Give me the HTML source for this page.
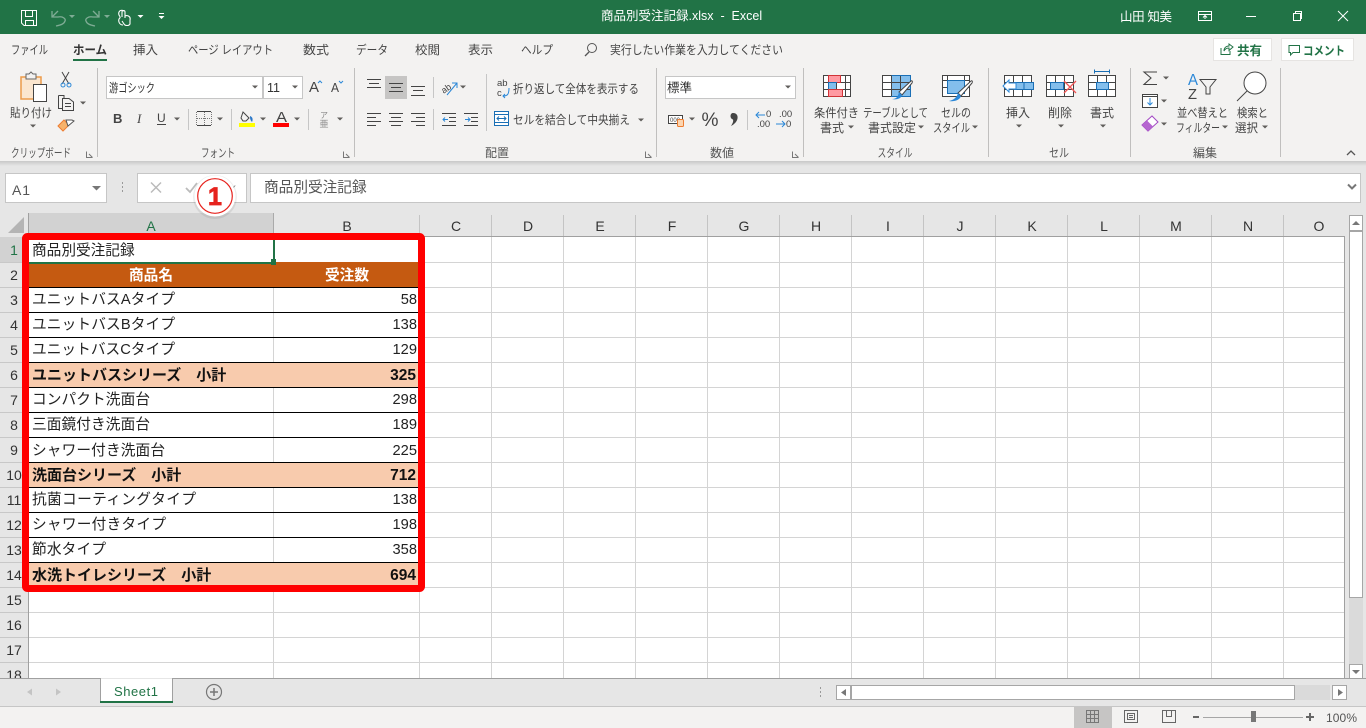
<!DOCTYPE html>
<html lang="ja"><head><meta charset="utf-8"><title>商品別受注記録.xlsx - Excel</title>
<style>
html,body{margin:0;padding:0;width:1366px;height:728px;overflow:hidden;background:#fff}
svg{display:block;font-family:"Liberation Sans","Noto Sans CJK JP",sans-serif}
svg text{white-space:pre}
.r{shape-rendering:crispEdges}
.rb{font-size:12px;fill:#444}
.m{text-anchor:middle}
.e{text-anchor:end}
.ch{font-size:14px;fill:#333;text-anchor:middle}
.rh{font-size:14px;fill:#333;text-anchor:middle}
.c{font-size:14.67px;fill:#222}
.n{font-size:14.67px;fill:#222;text-anchor:end}
.b{font-size:15px;font-weight:bold;fill:#111}
.bn{font-size:15.5px;font-weight:bold;fill:#111;text-anchor:end}
.ln{stroke:#444;stroke-width:1;shape-rendering:crispEdges;fill:none}
</style></head><body>
<svg width="1366" height="728" viewBox="0 0 1366 728" xmlns="http://www.w3.org/2000/svg">
<defs>
<path id="dd" d="M-3 -1.500H3L0 1.500Z" fill="#605e5c"/>
<linearGradient id="sh" x1="0" y1="0" x2="0" y2="1"><stop offset="0" stop-color="#c8c8c8"/><stop offset="1" stop-color="#e6e6e6"/></linearGradient>
</defs>
<rect class="r" width="1366" height="728" fill="#e6e6e6"/>
<!-- title bar -->
<rect class="r" width="1366" height="34" fill="#217346"/>
<g fill="none" stroke="#fff" stroke-width="1">
<path d="M21.500 10.500H36.500V25.500H24L21.500 23Z"/><path d="M25.500 10.500V16.500H32.500V10.500M25.500 25.500V20.500H33.500V25.500"/>
</g>
<g fill="none" stroke="#7fac95" stroke-width="1.300">
<path d="M52 11V17H58C63 16 66 19 65 21C64 24 61 25 56 26"/><path d="M52 17L58 11"/>
<path d="M99 11V17H93C88 16 85 19 86 21C87 24 90 25 95 26"/><path d="M99 17L93 11"/>
</g>
<path d="M69 15H75L72 18Z M104 15H110L107 18Z" fill="#7fac95"/>
<path d="M124 11C120 9 118 12 119 15C120 17 121 17 119 19C118 22 120 25 123 25M122 17V12C122 10 125 10 125 12V18M125 16C127 15 131 16 130 20V24C129 26 125 26 124 24L122 21" fill="none" stroke="#fff" stroke-width="1.100"/>
<path d="M137.500 15H143.500L140.500 18Z" fill="#fff"/>
<path d="M159 13H164V14H159Z M158.500 16H164.500L161.500 19Z" fill="#fff"/>
<text x="601" y="20" font-size="12.500" fill="#fff">商品別受注記録.xlsx  -  Excel</text>
<text x="1120" y="21" font-size="12.500" fill="#fff" textLength="52">山田 知美</text>
<g fill="none" stroke="#fff" stroke-width="1">
<path class="r" d="M1198.500 11.500H1211.500V20.500H1198.500ZM1198.500 14.500H1211.500"/><path d="M1205 19V15.500M1203 17.500L1205 15.500L1207 17.500"/>
<path class="r" d="M1246 16.500H1256"/>
<path class="r" d="M1293.500 13.500H1300.500V20.500H1293.500ZM1295.500 13.500V11.500H1301.500V18.500H1300.500"/>
<path d="M1338 11L1348 21M1348 11L1338 21"/>
</g>
<!-- ribbon -->
<rect class="r" y="34" width="1366" height="127" fill="#f3f2f1"/>
<rect class="r" y="161" width="1366" height="5" fill="url(#sh)"/>
<g class="rb">
<text x="11" y="54" textLength="37" lengthAdjust="spacingAndGlyphs">ファイル</text>
<text x="73" y="54" font-weight="bold" fill="#333" textLength="34" lengthAdjust="spacingAndGlyphs">ホーム</text>
<text x="133" y="54" textLength="25" lengthAdjust="spacingAndGlyphs">挿入</text>
<text x="188" y="54" textLength="85" lengthAdjust="spacingAndGlyphs">ページ レイアウト</text>
<text x="303" y="54" textLength="26" lengthAdjust="spacingAndGlyphs">数式</text>
<text x="356" y="54" textLength="32" lengthAdjust="spacingAndGlyphs">データ</text>
<text x="415" y="54" textLength="25" lengthAdjust="spacingAndGlyphs">校閲</text>
<text x="468" y="54" textLength="25" lengthAdjust="spacingAndGlyphs">表示</text>
<text x="521" y="54" textLength="32" lengthAdjust="spacingAndGlyphs">ヘルプ</text>
<text x="610" y="54" textLength="173" lengthAdjust="spacingAndGlyphs">実行したい作業を入力してください</text>
</g>
<rect class="r" x="73" y="59" width="34" height="2" fill="#217346"/>
<circle cx="592" cy="48" r="4.500" fill="none" stroke="#555"/><path d="M589 52L585 56" stroke="#555" stroke-width="1.300"/>
<rect class="r" x="1213.500" y="38.500" width="58" height="22" fill="#fff" stroke="#e6e4e2"/>
<rect class="r" x="1281.500" y="38.500" width="72" height="22" fill="#fff" stroke="#e6e4e2"/>
<path d="M1221 48V54.500H1230V51M1224 51C1224 47 1227 46 1229 46V44L1233 47L1229 50.500V48C1227 48 1225 49 1224 51Z" fill="none" stroke="#217346"/>
<text x="1237" y="55" font-size="12.500" font-weight="bold" fill="#217346">共有</text>
<path d="M1289 45.500H1299.500V52.500H1293L1290.500 55V52.500H1289Z" fill="none" stroke="#217346"/>
<text x="1303" y="55" font-size="12" font-weight="bold" fill="#217346" textLength="42" lengthAdjust="spacingAndGlyphs">コメント</text>
<!-- group separators -->
<g class="r" fill="#c0bfbe">
<rect x="97" y="68" width="1" height="89"/><rect x="354" y="68" width="1" height="89"/><rect x="656" y="68" width="1" height="89"/><rect x="803" y="68" width="1" height="89"/><rect x="988" y="68" width="1" height="89"/><rect x="1130" y="68" width="1" height="89"/><rect x="1280" y="68" width="1" height="89"/>
</g>
<g font-size="12" fill="#555" text-anchor="middle">
<text x="41" y="157" textLength="60" lengthAdjust="spacingAndGlyphs">クリップボード</text><text x="218" y="157" textLength="34" lengthAdjust="spacingAndGlyphs">フォント</text><text x="497" y="157">配置</text><text x="722" y="157">数値</text><text x="895" y="157" textLength="35" lengthAdjust="spacingAndGlyphs">スタイル</text><text x="1059" y="157" textLength="20" lengthAdjust="spacingAndGlyphs">セル</text><text x="1205" y="157">編集</text>
</g>
<g fill="none" stroke="#777" stroke-width="1">
<path d="M86.500 151.500V157.500H92.500M89 154L92.500 157.500"/><path d="M343.500 151.500V157.500H349.500M346 154L349.500 157.500"/><path d="M645.500 151.500V157.500H651.500M648 154L651.500 157.500"/><path d="M792.500 151.500V157.500H798.500M795 154L798.500 157.500"/>
</g>
<!-- clipboard -->
<rect x="21" y="77" width="20" height="22" fill="#fbe6cf" stroke="#ed9b4a" stroke-width="1.500"/>
<path d="M26 77V74H29L31 72L33 74H36V79H26Z" fill="#f3f2f1" stroke="#666"/>
<rect class="r" x="33.500" y="84.500" width="13" height="17" fill="#fff" stroke="#444"/>
<text x="31" y="117" class="rb m" textLength="42" lengthAdjust="spacingAndGlyphs">貼り付け</text>
<use href="#dd" x="33" y="126"/>
<path d="M62 72L69 84M69 72L62 84" stroke="#444" fill="none"/><circle cx="63" cy="85" r="2" fill="none" stroke="#2b88d8"/><circle cx="69" cy="85" r="2" fill="none" stroke="#2b88d8"/>
<path d="M58.500 95.500H64V98M58.500 95.500V108.500H62.500M62.500 98.500H69L73.500 102V110.500H62.500Z" fill="none" stroke="#444"/><path class="r" d="M65 103.500H71M65 106.500H71" stroke="#444"/>
<use href="#dd" x="83" y="103"/>
<path d="M58 126L64 120L69 125L63 131Z" fill="#f6b26b" stroke="#ed7d31"/><path d="M66 120L72 120L74 121L68 126Z" fill="#fff" stroke="#555"/>
<!-- font -->
<rect class="r" x="106.500" y="76.500" width="156" height="22" fill="#fff" stroke="#c6c6c6"/>
<rect class="r" x="263.500" y="76.500" width="39" height="22" fill="#fff" stroke="#c6c6c6"/>
<text x="109" y="92" font-size="12" fill="#333" textLength="46" lengthAdjust="spacingAndGlyphs">游ゴシック</text>
<text x="267" y="92" font-size="12.500" fill="#333">11</text>
<use href="#dd" x="255" y="87"/><use href="#dd" x="295" y="87"/>
<text x="309" y="92" font-size="15" fill="#444" textLength="10" lengthAdjust="spacingAndGlyphs">A</text><path d="M318 83L320 81L322 83" fill="none" stroke="#2b88d8"/>
<text x="331" y="92" font-size="13" fill="#444" textLength="8" lengthAdjust="spacingAndGlyphs">A</text><path d="M339 81L341 83L343 81" fill="none" stroke="#2b88d8"/>
<text x="113" y="123" font-size="13" font-weight="bold" fill="#444">B</text>
<text x="137" y="123" font-size="13" font-style="italic" font-family="Liberation Serif" fill="#444">I</text>
<text x="157" y="122" font-size="12" fill="#444">U</text><rect class="r" x="157" y="124" width="9" height="1" fill="#444"/>
<use href="#dd" x="177" y="119"/>
<rect class="r" x="188" y="109" width="1" height="21" fill="#c6c6c6"/>
<path class="r" d="M197 111.500H211M197 125.500H211" stroke="#444"/><path class="r" d="M196.500 112V125M211.500 112V125M204.500 112V125M197 118.500H211" stroke="#777" stroke-dasharray="1 1"/>
<use href="#dd" x="220" y="119"/>
<rect class="r" x="231" y="109" width="1" height="21" fill="#c6c6c6"/>
<path d="M243 112L249 118L246 121H243L241 118Z" fill="none" stroke="#444"/><path d="M250 116C253 117 253 120 252 122C250 120 250 118 250 116Z" fill="#2b78c8"/>
<rect class="r" x="239" y="123" width="16" height="4" fill="#ff0"/>
<use href="#dd" x="263" y="119"/>
<text x="276" y="122" font-size="15" fill="#444" textLength="11" lengthAdjust="spacingAndGlyphs">A</text>
<rect class="r" x="273" y="123" width="16" height="4" fill="#f00"/>
<use href="#dd" x="297" y="119"/>
<rect class="r" x="308" y="109" width="1" height="21" fill="#c6c6c6"/>
<text x="324" y="118" font-size="8" fill="#888" text-anchor="middle">ア</text><text x="324" y="127" font-size="9" fill="#888" text-anchor="middle">亜</text>
<use href="#dd" x="340" y="119"/>
<!-- alignment -->
<rect class="r" x="385" y="76" width="22" height="23" fill="#c6c5c4"/>
<g class="ln">
<path d="M367 79.500H381M369 83.500H379M367 87.500H381"/>
<path d="M389 83.500H403M391 87.500H401M389 91.500H403"/>
<path d="M411 86.500H425M413 90.500H423M411 95.500H425"/>
<path d="M367 113.500H381M367 117.500H376M367 121.500H381M367 125.500H376"/>
<path d="M389 113.500H403M391 117.500H401M389 121.500H403M391 125.500H401"/>
<path d="M411 113.500H425M416 117.500H425M411 121.500H425M416 125.500H425"/>
<path d="M442 113.500H456M449 117.500H456M449 121.500H456M442 125.500H456"/>
<path d="M464 113.500H478M471 117.500H478M471 121.500H478M464 125.500H478"/>
</g>
<path d="M448 119.500H443M445 117.500L443 119.500L445 121.500" fill="none" stroke="#2b88d8"/>
<path d="M465 119.500H470M468 117.500L470 119.500L468 121.500" fill="none" stroke="#2b88d8"/>
<rect class="r" x="433" y="77" width="1" height="21" fill="#c6c6c6"/><rect class="r" x="433" y="109" width="1" height="21" fill="#c6c6c6"/>
<text x="441" y="91" font-size="9" fill="#444" transform="rotate(-35 447 88)">ab</text>
<path d="M447 95L457 83M452 83H457V88" fill="none" stroke="#2b88d8"/>
<use href="#dd" x="463" y="87"/>
<rect class="r" x="486" y="74" width="1" height="57" fill="#c6c6c6"/>
<text x="497" y="86" font-size="9.500" fill="#444">ab</text><text x="497" y="96" font-size="9.500" fill="#444">c</text>
<path d="M509 88C509 95 507 96 503 96M505 94L503 96L505 98" fill="none" stroke="#2b88d8"/>
<text x="513" y="93" class="rb" textLength="126" lengthAdjust="spacingAndGlyphs">折り返して全体を表示する</text>
<rect class="r" x="494.500" y="111.500" width="14" height="14" fill="#fff" stroke="#1a6fb5"/><path class="r" d="M495 114.500H508M495 122.500H508" stroke="#1a6fb5"/>
<path d="M497 118.500H506M499 116.500L497 118.500L499 120.500M504 116.500L506 118.500L504 120.500" fill="none" stroke="#1a6fb5"/>
<text x="513" y="124" class="rb" textLength="117" lengthAdjust="spacingAndGlyphs">セルを結合して中央揃え</text>
<use href="#dd" x="641" y="120"/>
<!-- number -->
<rect class="r" x="665.500" y="76.500" width="130" height="22" fill="#fff" stroke="#c6c6c6"/>
<text x="667" y="92" font-size="12.500" fill="#333">標準</text><use href="#dd" x="788" y="87"/>
<rect class="r" x="668.500" y="115.500" width="14" height="8" fill="#fff" stroke="#444"/><text x="670" y="122" font-size="6" fill="#444">000</text>
<rect x="677.500" y="119.500" width="6" height="7" rx="1" fill="#fcd5b0" stroke="#ed7d31"/>
<use href="#dd" x="692" y="119"/>
<text x="710" y="126" font-size="19" fill="#444" text-anchor="middle" textLength="17" lengthAdjust="spacingAndGlyphs">%</text>
<path d="M733 113C737 113 738 116 737.500 118.500C737 121 735 124 731 126C733 123 733.500 121 733 119.500C729.500 118.500 730 113 733 113Z" fill="#444"/>
<rect class="r" x="747" y="110" width="1" height="20" fill="#c6c6c6"/>
<g font-size="9.500" fill="#444"><text x="766" y="117">0</text><text x="757" y="127">.00</text><text x="779" y="117">.00</text><text x="786" y="127">0</text></g>
<path d="M765 115H756M759 112L756 115L759 118M776 124H785M782 121L785 124L782 127" fill="none" stroke="#2b88d8"/>
<!-- styles -->
<g class="r">
<rect x="823.500" y="75.500" width="27" height="21" fill="#fff" stroke="#444"/>
<rect x="828.500" y="75.500" width="12" height="7" fill="#ff9aa2" stroke="#d13438"/>
<rect x="828.500" y="82.500" width="8" height="7" fill="#83beec" stroke="#1a6fb5"/>
<rect x="828.500" y="89.500" width="14" height="7" fill="#ff9aa2" stroke="#d13438"/>
<path d="M845.500 76V96M823.500 82.500H828M823.500 89.500H828M841 82.500H850M843 89.500H850M836.500 83V89" stroke="#444" fill="none"/>
<rect x="882.500" y="75.500" width="28" height="21" fill="#fff" stroke="#444"/>
<rect x="891.500" y="75.500" width="19" height="21" fill="#83beec" stroke="#1a6fb5"/>
<path d="M891.500 82.500H882.500M891.500 89.500H882.500M891.500 75.500V96M900.500 76V96M891.500 82.500H910M891.500 89.500H910" stroke="#444" fill="none"/>
<rect x="942.500" y="75.500" width="27" height="21" fill="#fff" stroke="#444"/>
<rect x="947.500" y="80.500" width="17" height="13" fill="#83beec" stroke="#1a6fb5"/>
<path d="M942.500 80.500H947M942.500 87.500H947M947.500 76V80M964.500 76V80M965 80.500H969M965 87.500H969" stroke="#444" fill="none"/>
</g>
<path d="M899 92L911 81C912 80 913 82 912 83L902 95Z" fill="#fff" stroke="#444"/><path d="M892 99C897 99 898 96 899 92L902 95C901 99 896 100 892 99Z" fill="#2b88d8"/>
<path d="M958 93L971 81C972 80 973 82 972 83L961 96Z" fill="#fff" stroke="#444"/><path d="M949 101C954 100 957 97 958 93L961 96C960 100 954 102 949 101Z" fill="#2b88d8"/>
<g class="rb m">
<text x="836.500" y="117" textLength="45" lengthAdjust="spacingAndGlyphs">条件付き</text><text x="895.500" y="117" textLength="65" lengthAdjust="spacingAndGlyphs">テーブルとして</text><text x="956" y="117" textLength="30" lengthAdjust="spacingAndGlyphs">セルの</text>
<text x="832" y="132">書式</text><text x="892" y="132" textLength="48" lengthAdjust="spacingAndGlyphs">書式設定</text><text x="951.500" y="132" textLength="37" lengthAdjust="spacingAndGlyphs">スタイル</text></g>
<use href="#dd" x="851" y="127"/><use href="#dd" x="921" y="127"/><use href="#dd" x="975" y="127"/>
<!-- cells -->
<g class="r" fill="none" stroke="#444">
<rect x="1004.500" y="75.500" width="27" height="21" fill="#fff"/><path d="M1013.500 76V96M1022.500 76V96M1004.500 82.500H1031M1004.500 89.500H1031"/>
<rect x="1046.500" y="75.500" width="27" height="21" fill="#fff"/><path d="M1055.500 76V96M1064.500 76V96M1046.500 82.500H1073M1046.500 89.500H1073"/>
<rect x="1088.500" y="75.500" width="27" height="21" fill="#fff"/><path d="M1097.500 76V96M1106.500 76V96M1088.500 82.500H1115M1088.500 89.500H1115"/>
<rect x="1014.500" y="82.500" width="19" height="7" fill="#83beec" stroke="#1a6fb5"/><path d="M1024 83V89" stroke="#1a6fb5"/>
<rect x="1050.500" y="82.500" width="13" height="7" fill="#83beec" stroke="#1a6fb5"/>
<rect x="1096.500" y="82.500" width="12" height="7" fill="#83beec" stroke="#1a6fb5"/>
<path d="M1094 71.500H1110M1094.500 69.500V73.500M1109.500 69.500V73.500" stroke="#1a6fb5"/>
</g>
<path d="M1016 83H1009V80L1003 86L1009 92V89H1016Z" fill="#fff" stroke="#2b88d8"/>
<path d="M1064 81L1076 93M1076 81L1064 93" stroke="#f25555" stroke-width="1.300" fill="none"/>
<g class="rb m"><text x="1018" y="117">挿入</text><text x="1060" y="117">削除</text><text x="1102" y="117">書式</text></g>
<use href="#dd" x="1019" y="126"/><use href="#dd" x="1061" y="126"/><use href="#dd" x="1103" y="126"/>
<!-- edit -->
<path d="M1157 72H1144L1151 78L1144 84.500H1157" fill="none" stroke="#444" stroke-width="1.100"/><use href="#dd" x="1166" y="78"/>
<rect class="r" x="1142.500" y="94.500" width="15" height="13" fill="#fff" stroke="#444"/><path class="r" d="M1142 96.500H1158" stroke="#444"/><path d="M1150 98V105M1147.500 102.500L1150 105L1152.500 102.500" fill="none" stroke="#2b88d8"/><use href="#dd" x="1164" y="101"/>
<path d="M1142 125L1152 116L1158 122L1148 131Z" fill="#fff" stroke="#a349c4"/><path d="M1142 125L1147 120.500L1153 126.500L1148 131Z" fill="#b566d0"/><use href="#dd" x="1164" y="124"/>
<text x="1188" y="85" font-size="16" fill="#2b88d8" textLength="10" lengthAdjust="spacingAndGlyphs">A</text><text x="1188" y="99" font-size="15" fill="#444" textLength="9" lengthAdjust="spacingAndGlyphs">Z</text>
<path d="M1200 79.500H1216L1210 87V94H1206V87Z" fill="none" stroke="#444"/>
<circle cx="1255" cy="83" r="11" fill="#fff" stroke="#444"/><path d="M1247 91L1237 101" stroke="#444" fill="none"/>
<g class="rb m"><text x="1202.500" y="117" textLength="51" lengthAdjust="spacingAndGlyphs">並べ替えと</text><text x="1198" y="132" textLength="44" lengthAdjust="spacingAndGlyphs">フィルター</text><text x="1252.500" y="117" textLength="31" lengthAdjust="spacingAndGlyphs">検索と</text><text x="1246.500" y="132" textLength="23" lengthAdjust="spacingAndGlyphs">選択</text></g>
<use href="#dd" x="1225" y="127"/><use href="#dd" x="1265" y="127"/>
<path d="M1347 155L1351 151L1355 155" fill="none" stroke="#555" stroke-width="1.300"/>
<!-- formula bar -->
<rect class="r" x="5.500" y="173.500" width="101" height="29" fill="#fff" stroke="#c6c6c6"/>
<text x="12" y="195" font-size="14" fill="#555" textLength="18">A1</text><path d="M92 186H101L96.500 190.500Z" fill="#777"/>
<path class="r" d="M122 182h1v2h-1zM122 186h1v2h-1zM122 190h1v2h-1z" fill="#999"/>
<rect class="r" x="137.500" y="173.500" width="109" height="29" fill="#fff" stroke="#c6c6c6"/>
<path d="M151 182.500L161 192.500M161 182.500L151 192.500" stroke="#bbb" stroke-width="1.500"/>
<path d="M186 188L190 192L197 183" fill="none" stroke="#bbb" stroke-width="1.800"/>
<text x="226" y="192" font-size="12" font-style="italic" fill="#888">fx</text>
<rect class="r" x="250.500" y="173.500" width="1110" height="29" fill="#fff" stroke="#c6c6c6"/>
<text x="264" y="192" font-size="14.670" fill="#555">商品別受注記録</text>
<path d="M1348 184.500L1352 188.500L1356 184.500" fill="none" stroke="#777" stroke-width="2"/>
<!-- sheet -->
<rect class="r" x="29" y="237" width="1316" height="441" fill="#fff"/>
<rect class="r" x="0" y="213" width="1345" height="24" fill="#e6e6e6"/>
<rect class="r" x="29" y="213" width="245" height="24" fill="#d2d2d2"/>
<rect class="r" x="0" y="237" width="28" height="25" fill="#d2d2d2"/>
<path d="M24 217V233H8Z" fill="#b4b4b4"/>
<g class="r" fill="#d4d4d4">
<rect x="273" y="237" width="1" height="441"/><rect x="419" y="237" width="1" height="441"/><rect x="491" y="237" width="1" height="441"/><rect x="563" y="237" width="1" height="441"/><rect x="635" y="237" width="1" height="441"/><rect x="707" y="237" width="1" height="441"/><rect x="779" y="237" width="1" height="441"/><rect x="851" y="237" width="1" height="441"/><rect x="923" y="237" width="1" height="441"/><rect x="995" y="237" width="1" height="441"/><rect x="1067" y="237" width="1" height="441"/><rect x="1139" y="237" width="1" height="441"/><rect x="1211" y="237" width="1" height="441"/><rect x="1283" y="237" width="1" height="441"/>
<rect x="29" y="262" width="1316" height="1"/><rect x="29" y="287" width="1316" height="1"/><rect x="29" y="312" width="1316" height="1"/><rect x="29" y="337" width="1316" height="1"/><rect x="29" y="362" width="1316" height="1"/><rect x="29" y="387" width="1316" height="1"/><rect x="29" y="412" width="1316" height="1"/><rect x="29" y="437" width="1316" height="1"/><rect x="29" y="462" width="1316" height="1"/><rect x="29" y="487" width="1316" height="1"/><rect x="29" y="512" width="1316" height="1"/><rect x="29" y="537" width="1316" height="1"/><rect x="29" y="562" width="1316" height="1"/><rect x="29" y="587" width="1316" height="1"/><rect x="29" y="612" width="1316" height="1"/><rect x="29" y="637" width="1316" height="1"/><rect x="29" y="662" width="1316" height="1"/>
<rect x="0" y="262" width="28" height="1" fill="#c8c8c8"/><rect x="0" y="287" width="28" height="1" fill="#c8c8c8"/><rect x="0" y="312" width="28" height="1" fill="#c8c8c8"/><rect x="0" y="337" width="28" height="1" fill="#c8c8c8"/><rect x="0" y="362" width="28" height="1" fill="#c8c8c8"/><rect x="0" y="387" width="28" height="1" fill="#c8c8c8"/><rect x="0" y="412" width="28" height="1" fill="#c8c8c8"/><rect x="0" y="437" width="28" height="1" fill="#c8c8c8"/><rect x="0" y="462" width="28" height="1" fill="#c8c8c8"/><rect x="0" y="487" width="28" height="1" fill="#c8c8c8"/><rect x="0" y="512" width="28" height="1" fill="#c8c8c8"/><rect x="0" y="537" width="28" height="1" fill="#c8c8c8"/><rect x="0" y="562" width="28" height="1" fill="#c8c8c8"/><rect x="0" y="587" width="28" height="1" fill="#c8c8c8"/><rect x="0" y="612" width="28" height="1" fill="#c8c8c8"/><rect x="0" y="637" width="28" height="1" fill="#c8c8c8"/><rect x="0" y="662" width="28" height="1" fill="#c8c8c8"/>
</g>
<g class="r" fill="#c4c4c4">
<rect x="273" y="213" width="1" height="24" fill="#aaa"/><rect x="419" y="215" width="1" height="22"/><rect x="491" y="215" width="1" height="22"/><rect x="563" y="215" width="1" height="22"/><rect x="635" y="215" width="1" height="22"/><rect x="707" y="215" width="1" height="22"/><rect x="779" y="215" width="1" height="22"/><rect x="851" y="215" width="1" height="22"/><rect x="923" y="215" width="1" height="22"/><rect x="995" y="215" width="1" height="22"/><rect x="1067" y="215" width="1" height="22"/><rect x="1139" y="215" width="1" height="22"/><rect x="1211" y="215" width="1" height="22"/><rect x="1283" y="215" width="1" height="22"/>
</g>
<rect class="r" x="28" y="213" width="1" height="465" fill="#a0a0a0"/>
<rect class="r" x="29" y="236" width="1316" height="1" fill="#a0a0a0"/>
<rect class="r" x="1344" y="237" width="1" height="441" fill="#a0a0a0"/>
<rect class="r" x="29" y="678" width="1316" height="1" fill="#a0a0a0"/>
<text x="151" y="231" class="ch" style="fill:#217346">A</text>
<g class="ch"><text x="347" y="231">B</text><text x="456" y="231">C</text><text x="528" y="231">D</text><text x="600" y="231">E</text><text x="672" y="231">F</text><text x="744" y="231">G</text><text x="816" y="231">H</text><text x="888" y="231">I</text><text x="960" y="231">J</text><text x="1032" y="231">K</text><text x="1104" y="231">L</text><text x="1176" y="231">M</text><text x="1248" y="231">N</text><text x="1319" y="231">O</text></g>
<text x="14" y="255" class="rh" style="fill:#217346">1</text>
<g class="rh"><text x="14" y="280">2</text><text x="14" y="305">3</text><text x="14" y="330">4</text><text x="14" y="355">5</text><text x="14" y="380">6</text><text x="14" y="405">7</text><text x="14" y="430">8</text><text x="14" y="455">9</text><text x="14" y="480">10</text><text x="14" y="505">11</text><text x="14" y="530">12</text><text x="14" y="555">13</text><text x="14" y="580">14</text><text x="14" y="605">15</text><text x="14" y="630">16</text><text x="14" y="655">17</text><text x="14" y="680">18</text></g>
<rect class="r" x="0" y="678" width="1366" height="50" fill="#e6e6e6"/>
<!-- table fills -->
<rect class="r" x="29" y="262" width="390" height="25" fill="#c55a11"/>
<rect class="r" x="29" y="362" width="390" height="25" fill="#f8cbad"/>
<rect class="r" x="29" y="462" width="390" height="25" fill="#f8cbad"/>
<rect class="r" x="29" y="562" width="390" height="25" fill="#f8cbad"/>
<g class="r" fill="#000">
<rect x="29" y="287" width="390" height="1"/><rect x="29" y="312" width="390" height="1"/><rect x="29" y="337" width="390" height="1"/><rect x="29" y="362" width="390" height="1"/><rect x="29" y="387" width="390" height="1"/><rect x="29" y="412" width="390" height="1"/><rect x="29" y="437" width="390" height="1"/><rect x="29" y="462" width="390" height="1"/><rect x="29" y="487" width="390" height="1"/><rect x="29" y="512" width="390" height="1"/><rect x="29" y="537" width="390" height="1"/><rect x="29" y="562" width="390" height="1"/>
</g>
<rect class="r" x="274" y="240" width="145" height="22" fill="#fff"/>
<text x="32" y="255" class="c">商品別受注記録</text>
<text x="151" y="280" font-size="14.670" font-weight="bold" fill="#fff" text-anchor="middle">商品名</text>
<text x="347" y="280" font-size="14.670" font-weight="bold" fill="#fff" text-anchor="middle">受注数</text>
<g class="c">
<text x="32" y="304" textLength="143">ユニットバスAタイプ</text><text x="32" y="329" textLength="143">ユニットバスBタイプ</text><text x="32" y="354" textLength="143">ユニットバスCタイプ</text>
<text x="32" y="404" textLength="118">コンパクト洗面台</text><text x="32" y="429" textLength="118">三面鏡付き洗面台</text><text x="32" y="455" textLength="133">シャワー付き洗面台</text>
<text x="32" y="504" textLength="164">抗菌コーティングタイプ</text><text x="32" y="529" textLength="134">シャワー付きタイプ</text><text x="32" y="554" textLength="74">節水タイプ</text>
</g>
<g class="n"><text x="417" y="304">58</text><text x="417" y="329">138</text><text x="417" y="354">129</text><text x="417" y="404">298</text><text x="417" y="429">189</text><text x="417" y="455">225</text><text x="417" y="504">138</text><text x="417" y="529">198</text><text x="417" y="554">358</text></g>
<g class="b"><text x="32" y="380">ユニットバスシリーズ　小計</text><text x="32" y="480">洗面台シリーズ　小計</text><text x="32" y="580">水洗トイレシリーズ　小計</text></g>
<g class="bn"><text x="416" y="380">325</text><text x="416" y="480">712</text><text x="416" y="580">694</text></g>
<!-- selection -->
<rect class="r" x="29" y="262" width="244" height="2" fill="#217346"/><rect class="r" x="273" y="240" width="2" height="22" fill="#217346"/><rect class="r" x="271" y="259" width="5" height="6" fill="#217346"/>
<!-- red box -->
<rect x="25.500" y="236.500" width="396" height="352" rx="2" fill="none" stroke="#f00" stroke-width="7"/>
<!-- badge -->
<circle cx="215" cy="197" r="22" fill="#000" opacity=".07"/>
<circle cx="215" cy="196" r="20.500" fill="#fff"/>
<circle cx="215" cy="196" r="17.300" fill="#fff" stroke="#e6231e" stroke-width="1.200"/>
<text x="215" y="205" font-size="25" font-weight="bold" fill="#e6231e" stroke="#e6231e" stroke-width=".8" text-anchor="middle">1</text>
<!-- scrollbars -->
<rect class="r" x="1349.500" y="215.500" width="13" height="15" fill="#fff" stroke="#a6a6a6"/><path d="M1352 225H1360L1356 221Z" fill="#777"/>
<rect class="r" x="1349.500" y="231.500" width="13" height="366" fill="#fff" stroke="#a6a6a6"/>
<rect class="r" x="1349" y="598" width="14" height="66" fill="#dadada"/>
<rect class="r" x="1349.500" y="664.500" width="13" height="14" fill="#fff" stroke="#a6a6a6"/><path d="M1352 670H1360L1356 674Z" fill="#777"/>
<!-- sheet tabs -->
<path d="M27 692L32 688.500V695.500Z" fill="#c4c4c4"/><path d="M56 688.500L61 692L56 695.500Z" fill="#c4c4c4"/>
<path class="r" d="M0 678.500H100.500V703M172.500 703V678.500H1366" fill="none" stroke="#a0a0a0"/>
<rect class="r" x="101" y="679" width="71" height="24" fill="#fff"/>
<rect class="r" x="100" y="701" width="73" height="2" fill="#217346"/>
<text x="136" y="696" font-size="13" fill="#217346" text-anchor="middle" textLength="44">Sheet1</text>
<circle cx="214" cy="692" r="7.500" fill="none" stroke="#777" stroke-width="1.200"/><path d="M210 692H218M214 688V696" stroke="#777" stroke-width="1.500"/>
<path class="r" d="M820 687h1v2h-1zM820 691h1v2h-1zM820 695h1v2h-1z" fill="#999"/>
<rect class="r" x="836.500" y="685.500" width="14" height="14" fill="#fff" stroke="#a6a6a6"/><path d="M846 689V696L841 692.500Z" fill="#777"/>
<rect class="r" x="851.500" y="685.500" width="443" height="14" fill="#fff" stroke="#a6a6a6"/>
<rect class="r" x="1295" y="685" width="35" height="15" fill="#dadada"/>
<rect class="r" x="1332.500" y="685.500" width="14" height="14" fill="#fff" stroke="#a6a6a6"/><path d="M1338 689V696L1343 692.500Z" fill="#777"/>
<!-- status bar -->
<rect class="r" y="706" width="1366" height="22" fill="#f3f2f1"/><rect class="r" y="706" width="1366" height="1" fill="#c6c6c6"/>
<rect class="r" x="1074" y="707" width="38" height="21" fill="#c6c5c4"/>
<path class="r" d="M1086.500 710.500H1098.500V722.500H1086.500ZM1086.500 714.500H1098.500M1086.500 718.500H1098.500M1090.500 711V722M1094.500 711V722" fill="none" stroke="#777"/>
<path class="r" d="M1124.500 710.500H1137.500V722.500H1124.500ZM1127.500 713.500H1134.500V719.500H1127.500ZM1129 715.500H1133M1129 717.500H1133" fill="none" stroke="#666"/>
<path class="r" d="M1162.500 710.500H1175.500V722.500H1162.500ZM1166.500 711V716.500H1171.500V711" fill="none" stroke="#666"/>
<rect class="r" x="1193" y="716" width="6" height="2" fill="#666"/>
<rect class="r" x="1203" y="717" width="100" height="1" fill="#a6a6a6"/>
<rect class="r" x="1251" y="711" width="5" height="11" fill="#777"/>
<path class="r" d="M1306 717H1314M1310 713V721" stroke="#666" stroke-width="2"/>
<text x="1326" y="722" font-size="12" fill="#555" textLength="31">100%</text>
</svg>
</body></html>
